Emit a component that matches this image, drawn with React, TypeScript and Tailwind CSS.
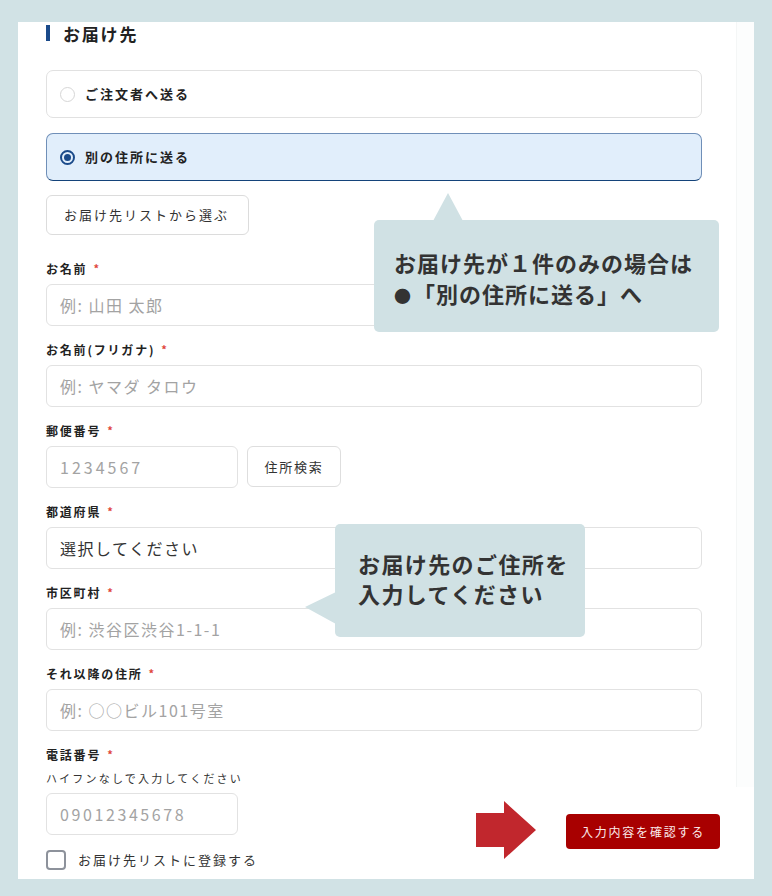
import type { ReactNode } from 'react'

const font = { fontFamily: '"Noto Sans CJK JP", "Noto Sans", sans-serif' }

function Label({ children }: { children: ReactNode }) {
  return (
    <div className="h-[17px] leading-[17px] mb-[7px] flex items-center text-[12px] font-bold tracking-[1.8px] text-[#222]">
      <span>{children}</span>
      <span className="ml-[6px] text-[11px] text-[#e0463c]">*</span>
    </div>
  )
}

function Field({ label, placeholder, value, wide = true, track = '1.5px' }: {
  label: string
  placeholder?: string
  value?: string
  wide?: boolean
  track?: string
}) {
  return (
    <div className="mb-[15px]">
      <Label>{label}</Label>
      <div className="flex gap-[9px]">
        <div
          className={`${wide ? 'w-full' : 'w-[192px]'} h-[42px] border border-[#e2e2e2] rounded-[6px] bg-white flex items-center px-[13px] text-[16px]`}
          style={{ letterSpacing: track }}
        >
          {value ? <span className="text-[#333]">{value}</span> : <span className="text-[#a3a3a3]">{placeholder}</span>}
        </div>
        {label === '郵便番号' && (
          <button className="w-[94px] h-[41px] border border-[#dedede] rounded-[6px] bg-white text-[13px] tracking-[1.8px] text-[#333]">
            住所検索
          </button>
        )}
      </div>
    </div>
  )
}

export default function App() {
  return (
    <div className="min-h-screen bg-[#d1e2e5] pt-[22px] pl-[18px]" style={font}>
      <div className="relative w-[736px] h-[857px] bg-white pl-[28px] pr-[52px]">
        <div className="absolute right-0 top-0 w-[18px] h-[765px] bg-[#fcfdfd] border-l border-[#f4f6f6]" />

        <div className="relative pt-[3px] flex items-center h-[19px]">
          <span className="shrink-0 w-[4px] h-[16px] bg-[#1a4a8a]" />
          <span className="ml-[13px] text-[17px] leading-[17px] font-bold tracking-[1.8px] text-[#222]">お届け先</span>
        </div>

        <div className="mt-[29px] h-[48px] border border-[#e1e1e1] rounded-[7px] bg-white flex items-center px-[13px]">
          <span className="w-[15px] h-[15px] rounded-full border-[1.5px] border-[#d6d6d6]" />
          <span className="ml-[10px] text-[13px] font-bold tracking-[2px] text-[#222]">ご注文者へ送る</span>
        </div>

        <div className="mt-[15px] h-[48px] border border-[#6f8fb8] border-b-[#14437a] rounded-[7px] bg-[#e1eefb] flex items-center px-[13px]">
          <span className="w-[15px] h-[15px] rounded-full border-2 border-[#1a4a8a] flex items-center justify-center">
            <span className="w-[7px] h-[7px] rounded-full bg-[#1a4a8a]" />
          </span>
          <span className="ml-[10px] text-[13px] font-bold tracking-[2px] text-[#222]">別の住所に送る</span>
        </div>

        <button className="mt-[14px] h-[40px] w-[203px] border border-[#dcdcdc] rounded-[6px] bg-white text-[13px] tracking-[2px] text-[#333] text-left pl-[17px]">
          お届け先リストから選ぶ
        </button>

        <div className="mt-[25px]">
          <Field label="お名前" placeholder="例: 山田 太郎" />
          <Field label="お名前(フリガナ)" placeholder="例: ヤマダ タロウ" />
          <Field label="郵便番号" placeholder="1234567" wide={false} track="3px" />
          <Field label="都道府県" value="選択してください" />
          <Field label="市区町村" placeholder="例: 渋谷区渋谷1-1-1" />
          <Field label="それ以降の住所" placeholder="例: ○○ビル101号室" />

          <div>
            <Label>電話番号</Label>
            <div className="h-[17px] leading-[17px] mb-[6px] text-[11px] tracking-[2.2px] text-[#333]">ハイフンなしで入力してください</div>
            <div className="w-[192px] h-[42px] border border-[#e2e2e2] rounded-[6px] bg-white flex items-center px-[13px] text-[16px] tracking-[2.6px] text-[#a3a3a3]">
              09012345678
            </div>
          </div>

          <label className="mt-[15px] flex items-center">
            <span className="w-[20px] h-[20px] rounded-[4px] border-2 border-[#8d929b] bg-white" />
            <span className="ml-[12px] text-[13px] tracking-[2px] text-[#333]">お届け先リストに登録する</span>
          </label>
        </div>

        {/* 吹き出し 1 */}
        <div className="absolute left-[356px] top-[198px] w-[345px] h-[112px] bg-[#d0e1e4] rounded-[5px] pl-[20px] pt-[27px] text-[22px] leading-[31px] font-bold text-[#333] tracking-[1px]">
          <svg className="absolute left-[59px] -top-[27px]" width="30" height="28" viewBox="0 0 30 28">
            <polygon points="15,0 30,28 0,28" fill="#d0e1e4" />
          </svg>
          <div>お届け先が１件のみの場合は</div>
          <div><span className="text-[17px] tracking-[2px]">●</span>「別の住所に送る」へ</div>
        </div>

        {/* 吹き出し 2 */}
        <div className="absolute left-[317px] top-[502px] w-[250px] h-[113px] bg-[#d0e1e4] rounded-[5px] pl-[23px] pt-[24px] text-[22px] leading-[30px] font-bold text-[#333] tracking-[1.4px]">
          <svg className="absolute -left-[30px] top-[68px]" width="31" height="32" viewBox="0 0 31 32">
            <polygon points="0,15 31,0 31,32" fill="#d0e1e4" />
          </svg>
          <div>お届け先のご住所を</div>
          <div>入力してください</div>
        </div>

        {/* 確認ボタン */}
        <svg className="absolute left-[458px] top-[779px]" width="60" height="58" viewBox="0 0 60 58">
          <polygon points="0,12 28,12 28,0 60,29 28,58 28,46 0,46" fill="#c1272d" />
        </svg>
        <button className="absolute left-[548px] top-[792px] w-[154px] h-[35px] rounded-[4px] bg-[#a80000] text-[12px] tracking-[1.8px] text-[#fbeaea]">
          入力内容を確認する
        </button>
      </div>
    </div>
  )
}
